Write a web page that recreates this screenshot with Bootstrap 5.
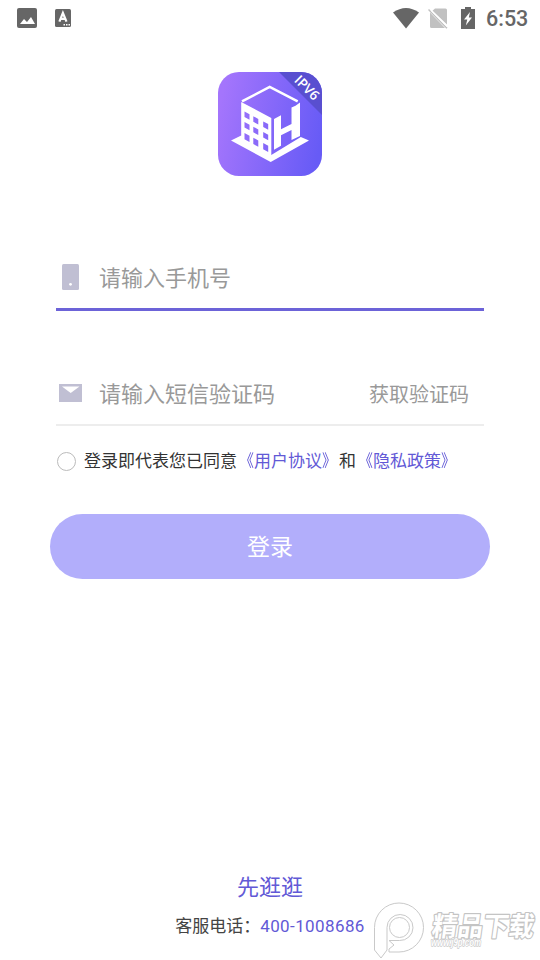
<!DOCTYPE html>
<html lang="zh-CN">
<head>
<meta charset="utf-8">
<meta name="viewport" content="width=device-width, initial-scale=1">
<title>登录</title>
<link href="https://cdn.jsdelivr.net/npm/bootstrap@5.3.0/dist/css/bootstrap.min.css" rel="stylesheet">
<style>
  body { font-family: Roboto, "Noto Sans CJK SC", sans-serif; background: #fff; color: #333; }
  svg { display: block; flex-shrink: 0; }
  .screen { height: 960px; overflow: hidden; }
  .status { height: 36px; padding: 0 12px 0 17px; color: #666; }
  .clock { font-size: 21.5px; font-weight: 500; line-height: 36px; width: 42px; margin-left: 11px; padding-top: 2px; white-space: nowrap; }
  .sim { margin-left: 9px; }
  .battery { margin-left: 13px; }
  .logo { margin-top: 36px; }
  .form-area { margin: 69px 56px 0; }
  .field { height: 66px; border-bottom: 3px solid #6c63d8; }
  .field-code { height: 67px; margin-top: 48px; border-bottom: 2px solid #ededed; }
  .icon-slot { width: 29px; margin-right: 14px; flex-shrink: 0; }
  .field .icon-slot { padding-right: 1px; }
  .field .form-control, .field-code .form-control { font-size: 22px; line-height: 32px; height: 32px; color: #333; box-shadow: none; }
  .field .form-control { margin-top: 4px; }
  .field-code .form-control, .get-code { margin-top: 6px; }
  .field-code .icon-slot { margin-top: 3px; }
  .form-control::placeholder { color: #999; opacity: 1; }
  .get-code { font-size: 20px; line-height: 32px; color: #999; margin-right: 15px; white-space: nowrap; }
  .agree { margin-top: 22px; font-size: 17px; line-height: 26px; white-space: nowrap; }
  .agree .form-check-input { width: 19px; height: 19px; border: 1.5px solid #bbb; margin: 0 8px 0 1px; flex-shrink: 0; }
  .brand-text { color: #6259d6; text-decoration: none; }
  .mark-open, .mark-close { display: inline-block; width: 17px; transform: scaleX(.85); }
  .mark-open { transform-origin: right; }
  .mark-close { transform-origin: left; }
  .login { margin: 40px 50px 0; padding: 3px 0 0; height: 65px; background: #b2aefb; color: #fff; font-size: 23px; line-height: 34px; }
  .login:hover { background: #a6a1f8; color: #fff; }
  .browse { font-size: 22px; line-height: 32px; }
  .service { font-size: 17px; line-height: 26px; margin: 9px 0 21px; color: #444; }
  .phone { letter-spacing: .4px; }
  .watermark { right: 0; bottom: 0; }
</style>
</head>
<body>
<main class="screen position-relative d-flex flex-column">
  <header class="status d-flex align-items-center">
    <svg width="20" height="20" viewBox="0 0 20 20"><rect width="20" height="20" rx="2" fill="#666"/><path d="M3 16l4-5 3 3 4-5 4 7z" fill="#fff"/></svg>
    <svg class="ms-3" width="20" height="20" viewBox="0 0 20 20"><rect x="2" y="1" width="16" height="18" rx="1.500" fill="#666"/><path d="M6.400 13.600L9.900 5l3.600 8.600M7.800 10.900h4.300" fill="none" stroke="#fff" stroke-width="2.200"/><path d="M10.500 16H12v1.500h-1.500zM13 16h1.500v1.500H13zM15.500 16H17v1.500h-1.500z" fill="#fff"/></svg>
    <svg class="ms-auto" width="26" height="21" viewBox="0 0 26 21"><path d="M0 4.500Q13-4.500 26 4.500L13 20.500z" fill="#666"/></svg>
    <svg class="sim" width="20" height="22" viewBox="0 0 20 22"><path d="M7 1.500h10.500q1.500 0 1.500 1.500v14.500L4.500 3.800zM2 5.500L17 21H3.500Q2 21 2 19.500z" fill="#c1c1c1"/><path d="M.5 2.500L19 21.200" stroke="#c1c1c1" stroke-width="1.500"/><path d="M3 3.200l16.500 16.500" stroke="#fff" stroke-width="1.300"/></svg>
    <svg class="battery" width="14" height="22" viewBox="0 0 14 22"><path d="M4 0h6v2h4v20H0V2h4z" fill="#666"/><path d="M9 5L3 12.500h3.300L4.800 18.500 11 10.500H7.800z" fill="#fff"/></svg>
    <div class="clock">6:53</div>
  </header>

  <svg class="logo align-self-center" width="104" height="104" viewBox="0 0 104 104" role="img" aria-label="IPV6">
    <defs>
      <linearGradient id="bg" x1="0" y1=".4" x2="1" y2=".6"><stop stop-color="#a475fc"/><stop offset="1" stop-color="#675bf6"/></linearGradient>
      <clipPath id="tile"><rect width="104" height="104" rx="21"/></clipPath>
      <!-- front face of the building with its nine window openings -->
      <mask id="windows">
        <rect width="104" height="104" fill="#fff"/>
        <path d="M26.500 39.500l5 2.700v5.600l-5-2.700zM35.300 44.200l5 2.700v5.600l-5-2.700zM45.200 49.400l5 2.700v5.600l-5-2.700zM26.500 50l5 2.700v5.600l-5-2.700zM35.300 54.700l5 2.700V63l-5-2.700zM45.200 60l5 2.700v5.600l-5-2.700zM26.500 61l5 2.700v6.300l-5-2.700zM35.300 65.700l5 2.700v6.300l-5-2.700zM45.200 71l5 2.700V80l-5-2.700z" fill="#000"/>
      </mask>
    </defs>
    <g clip-path="url(#tile)">
      <rect width="104" height="104" fill="url(#bg)"/>
      <path d="M61 0h43v43z" fill="#594fd0"/>
      <path d="M24 29.300L51.700 15l28 14.300" fill="none" stroke="#fff" stroke-width="2.500"/>
      <path d="M23.200 30L53.300 46v37l29.500-18L91 68.500 52.700 90 13 68.500l10.200-5z" fill="#fff" mask="url(#windows)"/>
      <path d="M56 47l7-3.800v14L73.500 52V35.500l4-1.700 4.500-3.300v33.500L73.500 68V58L63 63.300v10.500l-7 4z" fill="#fff"/>
    </g>
    <text transform="translate(75.500 9) rotate(45)" font-family="Open Sans, sans-serif" font-weight="600" font-size="13.500" fill="#fff">IPV6</text>
  </svg>

  <form class="form-area">
    <label class="field d-flex align-items-center">
      <span class="icon-slot d-flex justify-content-center"><svg width="17" height="26" viewBox="0 0 17 26"><rect width="17" height="26" rx="1.500" fill="#c0bfd3"/><circle cx="8.500" cy="20.300" r="1.400" fill="#fff"/></svg></span>
      <input class="form-control border-0 p-0 bg-transparent" type="tel" placeholder="请输入手机号">
    </label>
    <div class="field-code d-flex align-items-center">
      <span class="icon-slot d-flex justify-content-center"><svg width="23" height="18" viewBox="0 0 23 18"><path d="M0 0h23v18H0z" fill="#c0bfd3"/><path d="M3 2.500h17.500L11.700 9z" fill="#fff"/></svg></span>
      <input class="form-control border-0 p-0 bg-transparent" type="text" placeholder="请输入短信验证码">
      <span class="get-code">获取验证码</span>
    </div>
    <div class="agree d-flex align-items-center">
      <input class="form-check-input" type="radio" aria-label="同意">
      <span>登录即代表您已同意<a class="brand-text" href="#"><span class="mark-open">《</span>用户协议<span class="mark-close">》</span></a>和<a class="brand-text" href="#"><span class="mark-open">《</span>隐私政策<span class="mark-close">》</span></a></span>
    </div>
  </form>

  <button class="login btn border-0 rounded-pill" type="button">登录</button>

  <footer class="mt-auto text-center">
    <a class="browse brand-text d-block" href="#">先逛逛</a>
    <div class="service">客服电话：<a class="brand-text phone" href="tel:4001008686">400-1008686</a></div>
  </footer>

  <svg class="watermark position-absolute" width="175" height="70" viewBox="0 0 175 70">
    <g fill="#fff" stroke="#c9c9c9" stroke-width="1">
      <path d="M9.500 60V37.500A24.500 24.500 0 0 1 34 13a24.500 24.500 0 0 1 0 49H24v-3l5-4-5-4.500h10.500A13 13 0 1 0 22 37.500V60l-6 8z"/>
      <circle cx="34.500" cy="37.500" r="10"/>
    </g>
    <g stroke-linejoin="round" paint-order="stroke" fill="#fff">
      <text transform="translate(66 45.500) skewX(-8)" font-family="Noto Sans CJK SC, sans-serif" font-weight="700" font-size="27" stroke="#c4c4c4" stroke-width="2.400" textLength="102" lengthAdjust="spacingAndGlyphs">精品下载</text>
      <text x="66" y="56" font-family="Liberation Sans, sans-serif" font-weight="700" font-style="italic" font-size="10" stroke="#cacaca" stroke-width="1.400" textLength="50" lengthAdjust="spacingAndGlyphs">www.j9p.com</text>
    </g>
  </svg>
</main>
<script src="https://cdn.jsdelivr.net/npm/bootstrap@5.3.0/dist/js/bootstrap.bundle.min.js"></script>
</body>
</html>
